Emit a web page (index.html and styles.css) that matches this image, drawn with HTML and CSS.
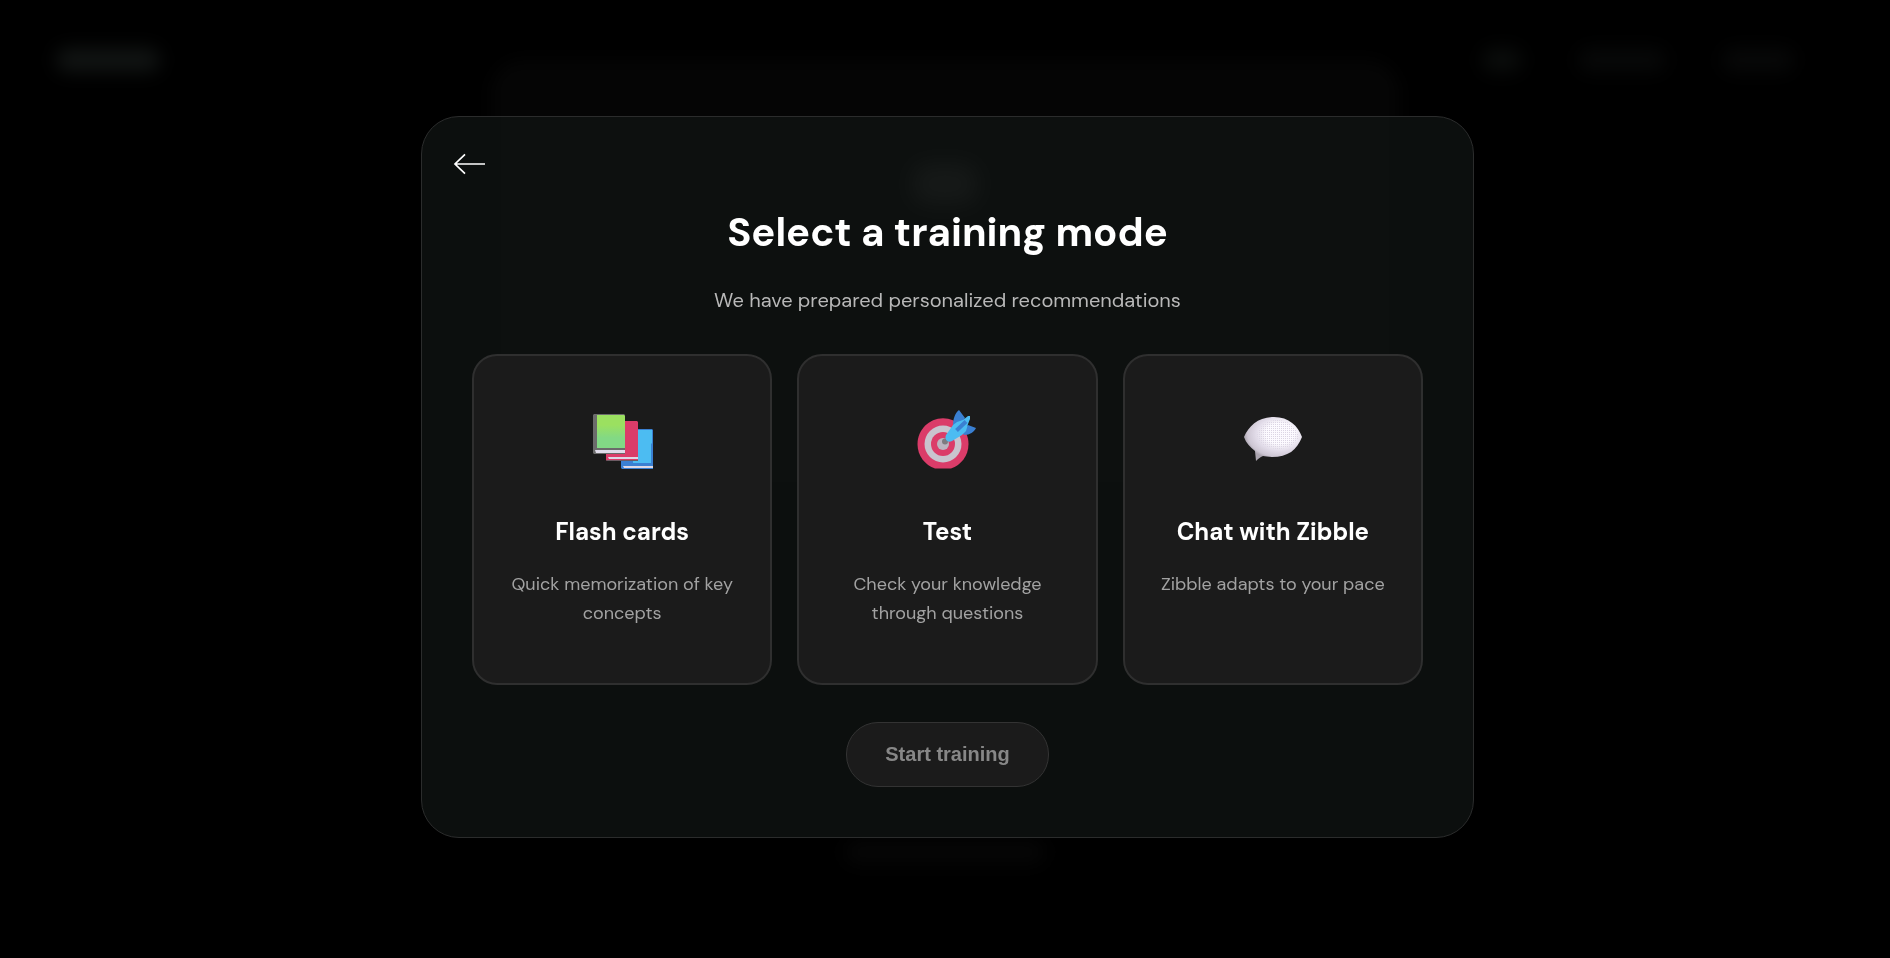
FILE: index.html
```html
<!DOCTYPE html>
<html lang="en">
<head>
<meta charset="utf-8">
<meta name="viewport" content="width=device-width, initial-scale=1">
<title>Select a training mode</title>
<link rel="stylesheet" href="styles.css">
</head>
<body>
<div class="backdrop" aria-hidden="true">
  <div class="topbar">
    <span class="glow glow-logo"></span>
    <span class="glow glow-short"></span>
    <span class="glow glow-wide"></span>
    <span class="glow glow-mid"></span>
  </div>
  <div class="panel"><span class="glow glow-mark"></span></div>
  <div class="glow glow-footer"></div>
</div>
<main class="overlay">
  <section class="modal" role="dialog" aria-labelledby="modal-title">
    <button class="back" type="button" aria-label="Back">
      <svg viewBox="0 0 32 32" width="32" height="32" fill="none" stroke="#fff" stroke-width="1.7">
        <path d="M32 16H2M12 6.3L2 16l10 9.7"/>
      </svg>
    </button>
    <h1 class="title" id="modal-title">Select a training mode</h1>
    <p class="subtitle">We have prepared personalized recommendations</p>
    <div class="modes">
      <button class="mode" type="button">
        <svg class="mode-icon" viewBox="0 0 64 64">
          <defs><linearGradient id="cover" x1="0" y1="0" x2="0" y2="1"><stop offset=".3" stop-color="#9be060"/><stop offset=".7" stop-color="#82d985"/></linearGradient></defs>
          <path d="M31 21h31l1 1v39H32l-1-1z" fill="#3a80d2"/>
          <path d="M46 22h16v13l-1 1v19H43V22z" fill="#4cbcf2"/>
          <path d="M33 58h30v2H34z" fill="#dcd8e6"/>
          <path d="M16 13h31l1 1v39H17l-1-1z" fill="#db3c69"/>
          <path d="M16 52h32v1H17z" fill="#6c5a63"/>
          <path d="M18 49h30v2H19z" fill="#dcd8e6"/>
          <path d="M4 6h30l1 1v39H4l-1-1V7z" fill="#6b6b6b"/>
          <path d="M7 7h27l1 1v32H7z" fill="url(#cover)"/>
          <path d="M5 42h30v3H6z" fill="#e0dcea"/>
        </svg>
        <span class="mode-name">Flash cards</span>
        <span class="mode-text">Quick memorization of key concepts</span>
      </button>
      <button class="mode" type="button">
        <svg class="mode-icon" viewBox="0 0 64 64">
          <path d="M20 60.5C10 57 2.5 48 2.5 36 2.5 22 14 10.3 28 10.3S53.5 22 53.5 36c0 12-7.5 21-17.500 24.500z" fill="#db3c69"/>
          <circle cx="28" cy="36" r="18.5" fill="#c9c4ce"/>
          <circle cx="28" cy="36" r="12" fill="#db3c69"/>
          <circle cx="28" cy="36" r="6" fill="#bbb4c0"/>
          <circle cx="30" cy="33.5" r="3" fill="#7e7a80"/>
          <path d="M31 32l3-4" stroke="#77737a" stroke-width="2"/>
          <path d="M38 17c0-6 2-12 6-15l6 8-7 10zM47 23l6-6 8 3c-2 4-6 7-12 7z" fill="#3a80d2"/>
          <path d="M31 27l7-10 4-3 6-2 5-4h2v3l-2 5-2 7-4 4-10 6c-4 2-8-1-6-6z" fill="#4cbcf2"/>
          <path d="M41.500 22.500L51 13.500" stroke="#3a80d2" stroke-width="4"/>
        </svg>
        <span class="mode-name">Test</span>
        <span class="mode-text">Check your knowledge through questions</span>
      </button>
      <button class="mode" type="button">
        <svg class="mode-icon" viewBox="0 0 64 64">
          <defs>
            <radialGradient id="bubble" gradientUnits="userSpaceOnUse" cx="39" cy="26" r="36" gradientTransform="matrix(1 0 0 .72 0 7)"><stop offset=".4" stop-color="#fcfaff"/><stop offset=".66" stop-color="#e2dce9"/><stop offset=".9" stop-color="#cdc6d3"/><stop offset="1" stop-color="#aba5b0"/></radialGradient>
            <pattern id="dots" width="2" height="2" patternUnits="userSpaceOnUse"><rect width="1" height="1" fill="#dcd5e4"/></pattern>
          </defs>
          <path d="M3 29C8 18 17 9 33 9c15 0 24 9 28 20-5 13-14 20-30 20-4 0-7-1-9-1-3 1-5 3-7 5l-1-10C9 39 5 35 3 29z" fill="url(#bubble)"/>
          <path d="M16 27c2-9 9-15 20-15 12 0 19 7 22 17-4 8-10 12-21 12S16 36 16 27z" fill="url(#dots)"/>
        </svg>
        <span class="mode-name">Chat with Zibble</span>
        <span class="mode-text">Zibble adapts to your pace</span>
      </button>
    </div>
    <button class="start" type="button" disabled>Start training</button>
  </section>
</main>
</body>
</html>
```

FILE: styles.css
```css
* { box-sizing: border-box; }

body {
  margin: 0;
  min-height: 100vh;
  background: #000;
  color: #fff;
  font-family: "DM Sans", Inter, sans-serif;
}

button {
  font: inherit;
  color: inherit;
  background: none;
  border: 0;
  padding: 0;
}

h1, p { margin: 0; }

/* Dimmed page behind the dialog */
.backdrop {
  position: fixed;
  inset: 0;
  display: flex;
  flex-direction: column;
  align-items: center;
  overflow: hidden;
}

.topbar {
  align-self: stretch;
  display: flex;
  align-items: center;
  gap: 56px;
  padding: 48px 96px 0 56px;
}

.glow {
  height: 24px;
  border-radius: 12px;
  background: #070808;
  filter: blur(9px);
}

.glow-logo { width: 104px; margin-right: auto; background: #111413; }
.glow-short { width: 40px; background: #0a0c0b; }
.glow-wide { width: 88px; }
.glow-mid { width: 72px; }

.panel {
  display: flex;
  justify-content: center;
  align-items: flex-start;
  width: 48%;
  height: 432px;
  margin-top: -12px;
  padding-top: 104px;
  border-radius: 32px;
  background: #050505;
  filter: blur(8px);
}

.glow-mark { width: 64px; height: 40px; background: #303030; }
.glow-footer { width: 200px; margin-top: 348px; background: #060606; }

.overlay {
  position: relative;
  min-height: 100vh;
  display: grid;
  place-items: center;
  padding: 24px 24px 28px 29px;
}

.modal {
  width: 100%;
  max-width: 1053px;
  display: flex;
  flex-direction: column;
  align-items: center;
  padding: 31px 50px 50px;
  border: 1px solid #2b2c2c;
  border-radius: 38px;
  background: rgba(16, 19, 18, 0.78);
}

.back {
  align-self: flex-start;
  width: 32px;
  height: 32px;
  margin-left: -19px;
}

.back svg { display: block; }

.title {
  margin-top: 28px;
  font-size: 40px;
  line-height: 48px;
  font-weight: 700;
  text-align: center;
}

.subtitle {
  margin-top: 28px;
  font-size: 20px;
  line-height: 32px;
  color: #b8b8b8;
  text-align: center;
}

.modes {
  align-self: stretch;
  display: grid;
  grid-template-columns: repeat(3, 1fr);
  gap: 25px;
  margin-top: 38px;
}

.mode {
  display: flex;
  flex-direction: column;
  align-items: center;
  padding: 52px 32px 55px;
  border: 2px solid #2f2f2f;
  border-radius: 25px;
  background: #1b1b1b;
  text-align: center;
}

.mode-icon { width: 64px; height: 64px; }

.mode-name {
  margin-top: 42px;
  font-size: 24px;
  line-height: 36px;
  font-weight: 700;
}

.mode-text {
  margin-top: 20px;
  font-size: 18px;
  line-height: 29px;
  color: #a2a2a2;
}

.start {
  margin-top: 37px;
  padding: 0 38px;
  border: 1px solid #333;
  border-radius: 32px;
  background: #1b1b1b;
  color: #878787;
  font-family: "Liberation Sans", Arial, sans-serif;
  font-size: 20px;
  line-height: 63px;
  font-weight: 700;
}

@media (max-width: 800px) {
  .modes { grid-template-columns: 1fr; }
}
```
